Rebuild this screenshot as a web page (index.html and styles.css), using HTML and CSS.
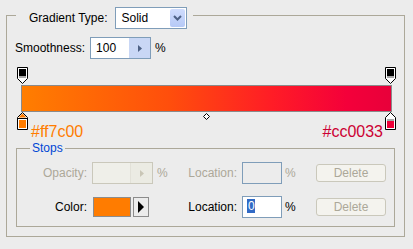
FILE: index.html
```html
<!DOCTYPE html>
<html lang="en">
<head>
    <meta charset="UTF-8">
    <title>Gradient Editor</title>
    <link rel="stylesheet" href="styles.css">
</head>
<body>
    <fieldset class="panel">
        <legend class="panel-head">
            <span>Gradient Type:</span>
            <div class="select">
                <span class="select-value">Solid</span>
                <span class="select-btn">
                    <svg width="9" height="6" viewBox="0 0 9 6"><path d="M1 1L4.5 4.5L8 1" fill="none" stroke="#4d6185" stroke-width="2"/></svg>
                </span>
            </div>
        </legend>

        <div class="row smooth">
            <span class="smooth-label">Smoothness:</span>
            <div class="spin">
                <span class="spin-value">100</span>
                <span class="spin-btn"><svg width="4" height="7" viewBox="0 0 4 7"><path d="M0 0L4 3.5L0 7Z" fill="#4d6185"/></svg></span>
            </div>
            <span class="pct">%</span>
        </div>

        <div class="ramp">
            <div class="ramp-top">
                <svg class="stop" width="11" height="17" viewBox="0 0 11 17"><path d="M0.5 0.5H10.5V11.5L5.5 16.5L0.5 11.5Z" fill="#fff" stroke="#000"/><rect x="2" y="2" width="7" height="7" fill="#000"/><rect x="2" y="9" width="7" height="2" fill="#a8a8a8"/></svg>
                <svg class="stop" width="11" height="17" viewBox="0 0 11 17"><path d="M0.5 0.5H10.5V11.5L5.5 16.5L0.5 11.5Z" fill="#fff" stroke="#000"/><rect x="2" y="2" width="7" height="7" fill="#000"/><rect x="2" y="9" width="7" height="2" fill="#a8a8a8"/></svg>
            </div>
            <div class="ramp-bar"></div>
            <div class="ramp-foot">
                <svg class="stop" width="11" height="18" viewBox="0 0 11 18"><path d="M5.5 0.5L10.5 5.5V17.5H0.5V5.5Z" fill="#fff" stroke="#000"/><path d="M5.5 1.6L9.4 5.5H1.6Z" fill="#ff7c00"/><line x1="0" y1="6.5" x2="11" y2="6.5" stroke="#000"/><rect x="2" y="8" width="7" height="8" fill="#ff7c00"/></svg>
                <span class="hex hex-start">#ff7c00</span>
                <span class="grow"></span>
                <span class="hex hex-end">#cc0033</span>
                <svg class="stop" width="11" height="18" viewBox="0 0 11 18"><path d="M5.5 0.5L10.5 5.5V17.5H0.5V5.5Z" fill="#fff" stroke="#000"/><rect x="2" y="7" width="7" height="2" fill="#a8a8a8"/><rect x="2" y="9" width="7" height="7" fill="#ee0038"/></svg>
                <svg class="midpoint" width="7" height="7" viewBox="0 0 7 7"><path d="M3.5 0.5L6.5 3.5L3.5 6.5L0.5 3.5Z" fill="#fff" stroke="#000"/></svg>
            </div>
        </div>

        <fieldset class="stops">
            <legend>Stops</legend>
            <div class="row">
                <span class="lbl off">Opacity:</span>
                <div class="spin spin-off">
                    <span class="spin-value"></span>
                    <span class="spin-btn"><svg width="4" height="7" viewBox="0 0 4 7"><path d="M0 0L4 3.5L0 7Z" fill="#c9c6b6"/></svg></span>
                </div>
                <span class="pct off">%</span>
                <span class="lbl2 off">Location:</span>
                <span class="loc loc-off"></span>
                <span class="pct2 off">%</span>
                <span class="btn">Delete</span>
            </div>
            <div class="row row-color">
                <span class="lbl">Color:</span>
                <span class="swatch"></span>
                <span class="pick"><svg width="6" height="12" viewBox="0 0 6 12"><path d="M0 0L6 6L0 12Z" fill="#000"/></svg></span>
                <span class="lbl2">Location:</span>
                <span class="loc"><span class="sel">0</span></span>
                <span class="pct2">%</span>
                <span class="btn">Delete</span>
            </div>
        </fieldset>
    </fieldset>
</body>
</html>
```

FILE: styles.css
```css
body {
    margin: 0;
    background-color: #ececec;
    font-family: "Liberation Sans", Arial, sans-serif;
    font-size: 12px;
    color: #000;
}
fieldset {
    min-width: 0;
}
.panel {
    margin: 1px 8px 0 6px;
    padding: 8px 9px 9px 9px;
    border: 1px solid #aca899;
}
.panel-head {
    display: flex;
    align-items: center;
    padding: 6px 6px 0 13px;
}
.select {
    display: flex;
    margin-left: 7px;
    width: 72px;
    height: 22px;
    box-sizing: border-box;
    border: 1px solid #7f9db9;
    background-color: #fff;
}
.select-value {
    flex: 1;
    padding-left: 6px;
    line-height: 20px;
}
.select-btn {
    width: 15px;
    margin: 1px;
    display: flex;
    align-items: center;
    justify-content: center;
    border-radius: 2px;
    background: linear-gradient(#cfdcfd, #b6c9f6);
}
.row {
    display: flex;
    align-items: center;
    height: 22px;
}
.smooth-label {
    margin-left: -1px;
}
.spin {
    display: flex;
    margin-left: 5px;
    width: 61px;
    height: 22px;
    box-sizing: border-box;
    border: 1px solid #7f9db9;
    background-color: #fff;
}
.spin-value {
    flex: 1;
    padding-left: 5px;
    line-height: 20px;
}
.spin-btn {
    width: 21px;
    display: flex;
    align-items: center;
    justify-content: center;
    background-color: #c9d7f5;
}
.spin-off {
    border-color: #cac8bb;
    background-color: #efefe9;
}
.spin-off .spin-btn {
    background-color: #ebebe3;
    border-left: 1px solid #e2e1d8;
}
.pct {
    margin-left: 4px;
    width: 12px;
}
.ramp {
    margin-top: 8px;
}
.ramp-top {
    display: flex;
    justify-content: space-between;
    margin: 0 -1px 0 1px;
    height: 17px;
}
.stop {
    display: block;
}
.ramp-bar {
    margin: 1px 3px 0 5px;
    height: 27px;
    box-sizing: border-box;
    border: 1px solid #8a8a8a;
    background: linear-gradient(to right, #ff7e00, #ff4e0c 40%, #ff1c26 68%, #f4003a 88%, #e8003a);
}
.ramp-foot {
    position: relative;
    display: flex;
    align-items: flex-start;
    height: 29px;
    margin: 0 -1px 0 1px;
}
.grow {
    flex: 1;
}
.hex {
    margin-top: 12px;
    font-size: 16px;
    line-height: 15px;
}
.hex-start {
    margin-left: 3px;
    color: #ff7c00;
}
.hex-end {
    margin-right: 2px;
    color: #cc0033;
}
.midpoint {
    position: absolute;
    left: 50%;
    top: 1px;
    margin-left: -4px;
}
.stops {
    margin: 0;
    padding: 7px 0 8px 0;
    border: 1px solid #aca899;
}
.stops legend {
    margin-left: 13px;
    padding: 0 2px;
    color: #0046d5;
    line-height: 14px;
}
.row-color {
    margin-top: 12px;
}
.lbl {
    width: 70px;
    text-align: right;
}
.lbl2 {
    width: 68px;
    text-align: right;
}
.off {
    color: #aca899;
}
.loc {
    margin-left: 5px;
    width: 40px;
    height: 22px;
    box-sizing: border-box;
    border: 1px solid #7f9db9;
    background-color: #fff;
    padding: 2px 0 0 4px;
}
.loc-off {
    background-color: #ececec;
}
.sel {
    display: inline-block;
    background-color: #316ac5;
    color: #fff;
    line-height: 14px;
    padding: 0 0 0 1px;
}
.pct2 {
    margin-left: 3px;
    width: 12px;
}
.btn {
    margin-left: 19px;
    width: 70px;
    height: 18px;
    box-sizing: border-box;
    border: 1px solid #cac8bb;
    border-radius: 3px;
    background-color: #f4f3ee;
    color: #aca899;
    text-align: center;
    line-height: 16px;
}
.swatch {
    margin-left: 6px;
    width: 38px;
    height: 20px;
    box-sizing: border-box;
    border: 1px solid #8c8c8c;
    background-color: #ff7c00;
}
.pick {
    margin-left: 2px;
    width: 16px;
    height: 20px;
    box-sizing: border-box;
    border: 1px solid #8c8c8c;
    display: flex;
    align-items: center;
    justify-content: center;
}
.row-color .lbl2 {
    width: 88px;
}
```
